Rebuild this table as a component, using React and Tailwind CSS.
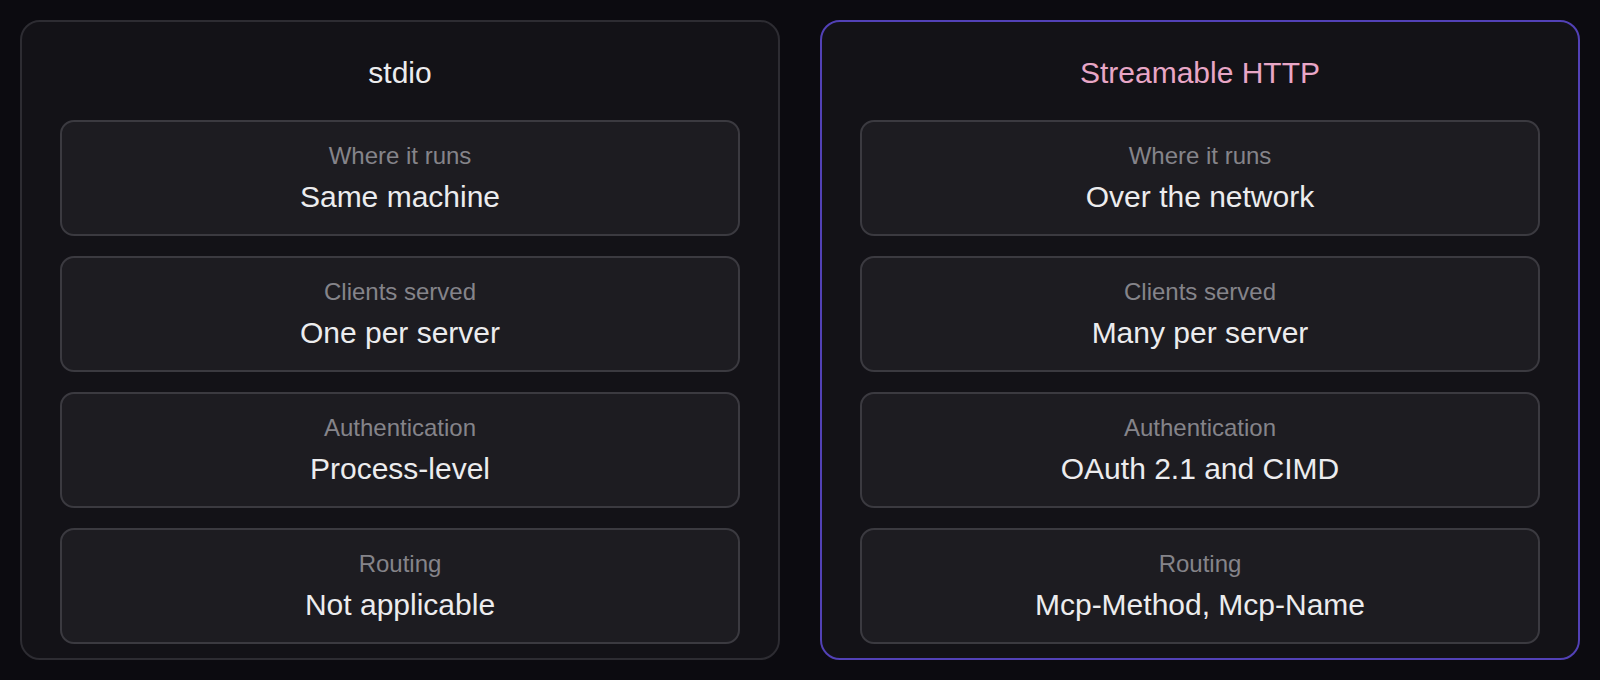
const columns = [
  {
    title: 'stdio',
    highlight: false,
    rows: [
      { label: 'Where it runs', value: 'Same machine' },
      { label: 'Clients served', value: 'One per server' },
      { label: 'Authentication', value: 'Process-level' },
      { label: 'Routing', value: 'Not applicable' },
    ],
  },
  {
    title: 'Streamable HTTP',
    highlight: true,
    rows: [
      { label: 'Where it runs', value: 'Over the network' },
      { label: 'Clients served', value: 'Many per server' },
      { label: 'Authentication', value: 'OAuth 2.1 and CIMD' },
      { label: 'Routing', value: 'Mcp-Method, Mcp-Name' },
    ],
  },
];

function Row({ label, value }) {
  return (
    <div className="h-[116px] rounded-[14px] border-2 border-[#3b3a40] bg-[#1d1c21] flex flex-col items-center justify-center gap-[10px]">
      <div className="text-[24px] leading-[28px] text-[#85848a]">{label}</div>
      <div className="text-[30px] leading-[34px] text-[#ececee]">{value}</div>
    </div>
  );
}

function Column({ title, highlight, rows }) {
  return (
    <div
      className={
        highlight
          ? 'flex-1 rounded-[20px] border-2 border-[#5241b6] bg-[#131217] px-[38px] pt-[28px] pb-[14px]'
          : 'flex-1 rounded-[20px] border-2 border-[#2d2c32] bg-[#131217] px-[38px] pt-[28px] pb-[14px]'
      }
    >
      <div
        className={
          highlight
            ? 'text-center text-[30px] leading-[46px] text-[#e8a6c6]'
            : 'text-center text-[30px] leading-[46px] text-[#ececee]'
        }
      >
        {title}
      </div>
      <div className="mt-[24px] flex flex-col gap-[20px]">
        {rows.map(r => (
          <Row key={r.label} label={r.label} value={r.value} />
        ))}
      </div>
    </div>
  );
}

export default function App() {
  return (
    <div className="w-[1600px] h-[680px] bg-[#0c0b10] p-[20px] flex gap-[40px] font-['Liberation_Sans',Arial,sans-serif]">
      {columns.map(c => (
        <Column key={c.title} {...c} />
      ))}
    </div>
  );
}
